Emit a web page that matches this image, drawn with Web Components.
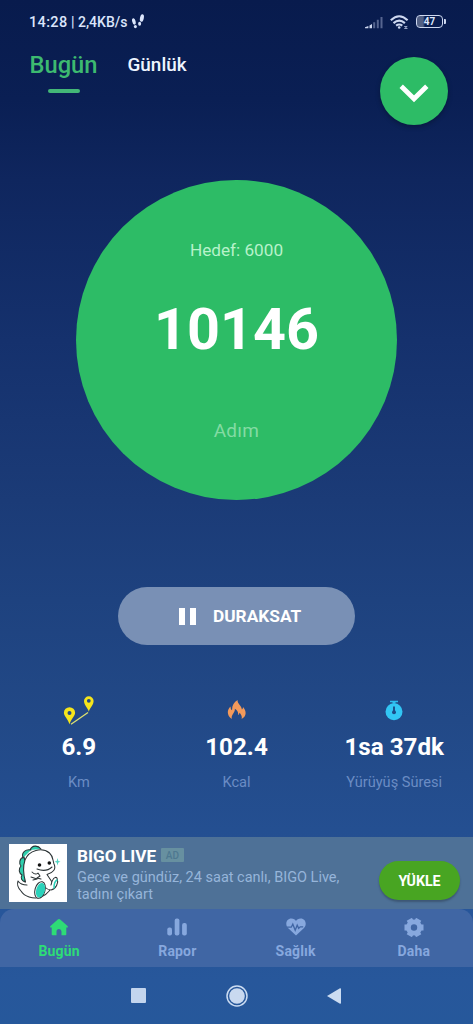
<!DOCTYPE html>
<html lang="tr">
<head>
<meta charset="utf-8">
<title>Adım Sayar</title>
<style>
html,body{margin:0;padding:0;height:100%;background:#0a1d50}
body{font-family:Roboto,"Liberation Sans",sans-serif;color:#fff;overflow:hidden}
</style>
</head>
<body>
<step-app></step-app>
<script>
const define = (name, html) => customElements.define(name, class extends HTMLElement {
  constructor() {
    super();
    const t = document.createElement('template');
    t.innerHTML = html;
    this.attachShadow({mode: 'open'}).append(t.content.cloneNode(true));
  }
});

define('status-bar', `
<style>
:host{display:flex;align-items:center;height:44px;padding:1px 27px 0 29px;color:#dbe5fb;box-sizing:border-box}
.t{font-size:14px;font-weight:500;line-height:20px;white-space:pre}
.t b{font-weight:500;font-size:14.5px;letter-spacing:.35px}
svg{display:block;flex:none}
.steps{margin:0 0 0 4px}
.sig{margin-left:auto}
.wifi{margin-left:7px}
.bat{display:flex;align-items:center;margin:-2px 0 0 7px}
.cell{width:27px;height:13px;box-sizing:border-box;border:1.4px solid #ced8f0;border-radius:4px;background:linear-gradient(90deg,#526084 0 6px,transparent 8px);background-clip:content-box;font-size:10px;font-weight:700;line-height:11px;text-align:center}
.tip{width:2px;height:5px;background:#ced8f0;border-radius:0 1px 1px 0;margin-left:1px}
</style>
<span class="t"><b>14:28</b> | 2,4KB/s</span>
<svg class="steps" width="14" height="18" viewBox="0 0 14 18" fill="#dbe5fb"><ellipse cx="2.9" cy="8.4" rx="1.7" ry="3.3" transform="rotate(-14 2.9 8.4)"/><ellipse cx="4.4" cy="13.6" rx="1.5" ry="1.7"/><ellipse cx="10.9" cy="5" rx="1.9" ry="3.8" transform="rotate(12 10.9 5)"/><ellipse cx="8.6" cy="10.8" rx="1.5" ry="2"/></svg>
<svg class="sig" width="18" height="13" viewBox="0 0 18 13"><path fill="#ced8f0" d="M0 12.300V11.300L3.400 10v2.300zM4.500 9.400 7 8v4.300H4.500z"/><path fill="#566590" d="M8.200 6.200h2v6.100h-2zM11.800 3.700h2v8.600h-2zM15.500 1h2v11.300h-2z"/></svg>
<svg class="wifi" width="19" height="15" viewBox="0 0 19 15" fill="none" stroke="#ced8f0" stroke-width="2.100"><path d="M.8 5.200Q9.200-2.700 17.600 5.200M3.500 8.100q5.700-5 11.400 0M6.100 10.700q3.100-2.400 6.200 0"/><circle cx="9.200" cy="12.500" r="1.300" fill="#ced8f0" stroke="none"/><path stroke-width="1" stroke="#98a5c8" d="M14.200 11.500h3l-2.700 2h3"/></svg>
<div class="bat"><div class="cell">47</div><div class="tip"></div></div>
`);

define('top-tabs', `
<style>
:host{display:flex;height:136px;box-sizing:border-box;padding:7px 25px 0 29px;align-items:flex-start}
.a{width:69px;display:flex;flex-direction:column;align-items:center;color:#3dba70;font-size:23.700px;font-weight:500;line-height:28px}
.a span{margin-top:.5px}
.a i{width:32px;height:4px;border-radius:2px;background:#43b777;margin-top:9.500px}
.b{margin-left:29.500px;font-size:18.900px;line-height:28px;font-weight:500;color:#eef5ff}
button{margin:6.500px 0 0 auto;width:68px;height:68px;padding:0;border:0;border-radius:50%;background:#2dbc66;box-shadow:0 2px 5px #0004;display:grid;place-items:center}
button svg{margin-top:3px}
</style>
<div class="a"><span>Bugün</span><i></i></div><div class="b">Günlük</div>
<button aria-label="Aç"><svg width="30" height="20" viewBox="0 0 30 20" fill="none" stroke="#fff" stroke-width="4.800"><path d="M2.200 3.200 15 15.800 27.800 3.200"/></svg></button>
`);

define('step-ring', `
<style>
:host{display:flex;flex-direction:column;align-items:center;width:321px;height:321px;margin:0 auto;border-radius:50%;background:#2dbc66;box-sizing:border-box;padding-top:59.500px}
.g{font-size:17.200px;line-height:22px;color:#b7f2ca}
.n{font-size:57.500px;line-height:64px;font-weight:700;margin-top:37px}
.u{font-size:19px;line-height:24px;color:#83dba3;margin-top:56.500px;letter-spacing:.3px}
</style>
<div class="g"><slot name="goal"></slot></div><div class="n"><slot></slot></div><div class="u"><slot name="unit"></slot></div>
`);

define('pause-button', `
<style>
:host{display:flex;align-items:center;width:237px;height:58px;box-sizing:border-box;margin:87px auto 0;border-radius:29px;background:#7990b5;padding-left:60.500px;font-size:17.300px;font-weight:700}
i{width:6px;height:17px;background:#fff;margin-right:5px}
span{margin:0 0 0 12.500px;line-height:22px}
</style><i></i><i></i><span><slot></slot></span>
`);

define('stat-item', `
<style>
:host{display:flex;flex-direction:column;align-items:center;flex:1;min-width:0}
.i{height:32px;display:grid;place-items:center}
.v{font-size:24.200px;font-weight:700;line-height:30px;margin-top:6px;white-space:nowrap}
.l{font-size:14.600px;line-height:20px;color:#6b8cc4;margin-top:10px;white-space:nowrap}
</style>
<div class="i"><slot name="icon"></slot></div><div class="v"><slot></slot></div><div class="l"><slot name="label"></slot></div>
`);

define('stats-row', `
<style>:host{display:flex;height:143px;margin-top:49px}svg{display:block}</style>
<stat-item><svg slot="icon" width="32" height="30" viewBox="0 0 32 30"><path d="M8 29.300 25 17.500" stroke="#dfe36f" stroke-width="1.300"/><path fill="#f5e51b" fill-rule="evenodd" d="M6.500 29.300C5 24 .9 21.300 .9 17.800a5.600 5.600 0 0 1 11.200 0C12.100 21.300 8 24 6.500 29.300zM6.500 16a2 2 0 1 0 0 4 2 2 0 0 0 0-4zM25.800 16.700C24.500 12.500 21 9.900 21 6.100a4.800 4.800 0 0 1 9.600 0C30.600 9.900 27.100 12.500 25.800 16.700zM25.800 3.900a1.900 1.900 0 1 0 0 3.800 1.900 1.900 0 0 0 0-3.800z"/></svg>6.9<span slot="label">Km</span></stat-item>
<stat-item><svg slot="icon" width="20" height="20" viewBox="0 0 20 20"><path fill="#f39a5b" d="M4.800 19C-.3 15.500-.3 9.700 3.600 6.400c-.1 2 .3 3.100 1.500 3.900C4.800 6 6.800 2.200 10.600 0c-.4 3.900 3.600 5.200 4.300 9.400.8-.6 1.100-1.400 1.100-2.500 3.900 4.500 3.500 9.500-1.400 12.200.7-2.800-.5-4.600-2.100-6.300-.2 1.200-.6 1.900-1.300 2.300.2-3-1.100-5.200-3.400-6.300.7 3.600-3.900 5.700-3 10.200z"/></svg>102.4<span slot="label">Kcal</span></stat-item>
<stat-item><svg slot="icon" width="18" height="21" viewBox="0 0 18 21"><path d="M5 .7h8v1.500h-2.500v1.500h-3V2.200H5z" fill="#2dbdee"/><circle cx="9" cy="11.800" r="8.500" fill="#32c6f4"/><path d="M9 6.500v6" stroke="#1c4c88" stroke-width="1.900"/><circle cx="9" cy="12.200" r="2" fill="#1c4c88"/></svg>1sa 37dk<span slot="label">Yürüyüş Süresi</span></stat-item>
`);

define('ad-banner', `
<style>
:host{display:flex;height:72px;box-sizing:border-box;background:#4e7197;padding:7px 13px 0 9px;align-items:flex-start}
.logo{display:block;background:#fff;flex:none}
.c{margin:1px 0 0 10px;flex:1;white-space:nowrap}
.h{display:flex;align-items:center;font-size:17.200px;font-weight:700;line-height:22px}
.ad{margin:-3px 0 0 5px;width:23px;height:14px;background:#6790a0;border-radius:1px;color:#4e7890;font-size:10px;font-weight:500;line-height:15px;text-align:center;letter-spacing:.3px}
p{margin:2px 0 0;font-size:14.500px;line-height:17px;color:#96b5da}
button{width:81px;height:39px;margin-top:17px;padding:0;border:0;border-radius:20px;background:#48a522;color:#fff;font:700 14.200px Roboto,sans-serif;box-shadow:0 2px 2px #2346;flex:none}
</style>
<svg class="logo" width="58" height="58" viewBox="0 0 58 58" fill="none" stroke="#2b3335" stroke-width="1.050" stroke-linecap="round" stroke-linejoin="round">
<g fill="#2fcfad"><path d="M32 5C29 1 23 1 21 6M22 6c-5-1-10 2-8 8M15 13c-5 1-5 7-3 9-3 3-2 7 1 9-2 3 0 6 3 7l1-17z"/></g>
<path fill="#fff" d="M16.500 38C14.500 31 14 22 16 16 20 6 33 3 40.500 9c4 3.500 3 7 4.500 11 2.500 5-1 9-7 10.500L43 38c0 7-4 12-11 15-8 3-17-1-20-6-3-3-4-7-3-10 2 3 5 4 9 4"/>
<path d="M28 25q9 3.500 15-2M23 28c2 2 4 3 6 1l2 3-3 2 4 1M22 33l6 2-4 1"/>
<path fill="#fff" d="M42 41c1-6 4-9 6-7 2 5-1 11-6 12-2 0-4-1-5-2"/>
<ellipse cx="31" cy="46" rx="5" ry="8.500" transform="rotate(16 31 46)" fill="#fff"/>
<ellipse cx="31.500" cy="46.300" rx="4.300" ry="7.500" transform="rotate(16 31.500 46.300)" fill="#2ad2ba" stroke="none"/>
<path d="M45 44c0-4 1-7 3-8" stroke="#2ad2ba" stroke-width="1.500"/>
<circle cx="30.500" cy="21" r="1.800" fill="#111" stroke="none"/><circle cx="40.300" cy="19" r="1.800" fill="#111" stroke="none"/><path fill="#4fd5c2" stroke="none" d="M48.500 14l.8 2.900 2.200.8-2.200.8-.8 2.900-.8-2.900-2.200-.8 2.200-.8z"/></svg>
<div class="c"><div class="h">BIGO LIVE<span class="ad">AD</span></div><p>Gece ve gündüz, 24 saat canlı, BIGO Live,<br>tadını çıkart</p></div>
<button>YÜKLE</button>
`);

define('nav-item', `
<style>
:host{flex:1;display:flex;flex-direction:column;align-items:center;color:#87a8de}
:host([active]){color:#2edc76}
.i{height:20px;margin-top:8px;display:grid;place-items:center}
.l{font-size:14px;font-weight:700;line-height:18px;margin-top:5px;letter-spacing:.15px}
</style><div class="i"><slot name="icon"></slot></div><div class="l"><slot></slot></div>
`);

define('bottom-nav', `
<style>
:host{display:block;height:58px;background:#27569a}
nav{display:flex;height:58px;background:#4066a4;border-radius:14px 14px 0 0}
svg{display:block;fill:currentColor}
</style>
<nav>
<nav-item active><svg slot="icon" width="18" height="18" viewBox="0 0 18 18"><path d="M9 1Q9.800 1 10.500 1.700L17.800 8.300V9.500H16.300V16.500Q16.300 17.300 15.300 17.300H11.500V13.500a2.500 2.500 0 0 0-5 0v3.800H2.700Q1.700 17.300 1.700 16.500V9.500H.2V8.300L7.500 1.700Q8.200 1 9 1z"/></svg>Bugün</nav-item>
<nav-item><svg slot="icon" width="20" height="18" viewBox="0 0 20 18"><rect x=".3" y="9.500" width="4.700" height="8" rx="2"/><rect x="7.700" y=".5" width="4.700" height="17" rx="2"/><rect x="15.100" y="5" width="4.700" height="12.500" rx="2"/></svg>Rapor</nav-item>
<nav-item><svg slot="icon" width="20" height="18" viewBox="0 0 20 18"><path d="M10 17.500 2 10C-1.500 6 .7.500 5.300.500 7.600.5 9.200 1.600 10 3 10.800 1.600 12.400.5 14.700.5 19.300.5 21.500 6 18 10z"/><path d="M1 9.200h4.300l1.500-3 2.400 6 2-5 1.500 3.200 1.500-1.500h3" fill="none" stroke="#4066a4" stroke-width="1.300"/></svg>Sağlık</nav-item>
<nav-item><svg slot="icon" width="20" height="19" viewBox="0 0 20 19"><circle cx="10" cy="9.500" r="8"/><path fill="none" stroke="currentColor" stroke-width="6" stroke-linejoin="round" d="M.5 9.500h19M5.300 1.300l9.400 16.400M14.700 1.300 5.300 17.700"/><circle cx="10" cy="9.500" r="3.200" fill="#4066a4"/></svg>Daha</nav-item>
</nav>
`);

define('system-nav', `
<style>:host{display:flex;height:57px;box-sizing:border-box;align-items:center;justify-content:center;padding-right:1px}
svg{display:block}.a{margin-right:80px}.b{margin-right:79px}</style>
<svg class="a" width="15" height="15"><rect width="15" height="15" rx="1" fill="#c3d5ee"/></svg>
<svg class="b" width="22" height="22" viewBox="0 0 22 22"><circle cx="11" cy="11" r="10" fill="none" stroke="#cbdcf2" stroke-width="1.500"/><circle cx="11" cy="11" r="7.800" fill="#c9d9f0"/></svg>
<svg width="14" height="16" viewBox="0 0 14 16"><path d="M0 8 13 .2Q14 0 14 1V15q0 1-1 .8z" fill="#cbdcf2"/></svg>
`);

define('step-app', `
<style>
:host{display:flex;flex-direction:column;width:473px;height:1024px;background:linear-gradient(#081b4d 0,#0a1f54 100px,#0f265e 180px,#15316d 340px,#1b3b77 500px,#1e427f 600px,#224987 720px,#244f91 830px,#27579b 980px,#26589b)}
</style>
<status-bar></status-bar>
<top-tabs></top-tabs>
<step-ring><span slot="goal">Hedef: 6000</span>10146<span slot="unit">Adım</span></step-ring>
<pause-button>DURAKSAT</pause-button>
<stats-row></stats-row>
<ad-banner></ad-banner>
<bottom-nav></bottom-nav>
<system-nav></system-nav>
`);
</script>
</body>
</html>
